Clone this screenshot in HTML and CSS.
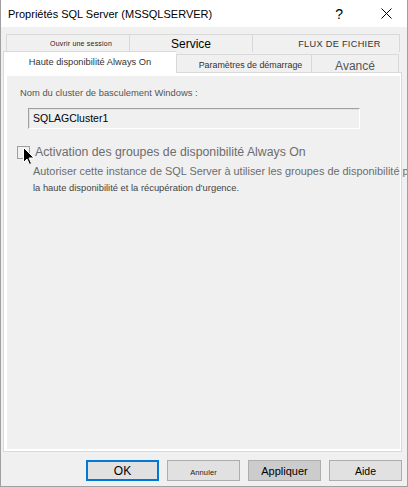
FILE: index.html
```html
<!DOCTYPE html>
<html lang="fr">
<head>
<meta charset="utf-8">
<title>Propriétés SQL Server</title>
<link rel="stylesheet" href="styles.css">
</head>
<body>
<div class="window">
  <div class="titlebar">
    <span class="title">Propriétés SQL Server (MSSQLSERVER)</span>
    <span class="help">?</span>
    <svg class="close" width="11" height="11" viewBox="0 0 11 11"><path d="M0.5 0.5 L10.5 10.5 M10.5 0.5 L0.5 10.5" stroke="#000" stroke-width="1" fill="none"/></svg>
  </div>
  <div class="body">
    <div class="tabrow back">
      <div class="tab t-ouvrir"><span class="tiny">Ouvrir une session</span></div>
      <div class="tab t-service">Service</div>
      <div class="tab t-flux">FLUX DE FICHIER</div>
    </div>
    <div class="tabrow front">
      <div class="tab selected t-haute">Haute disponibilité Always On</div>
      <div class="tab t-param">Paramètres de démarrage</div>
      <div class="tab t-avance">Avancé</div>
    </div>
    <div class="panel">
      <div class="page">
        <div class="label">Nom du cluster de basculement Windows :</div>
        <div class="textbox">SQLAGCluster1</div>
        <div class="checkrow">
          <span class="checkbox"></span>
          <span class="checklabel">Activation des groupes de disponibilité Always On</span>
          <svg class="cursor" width="12" height="19" viewBox="0 0 12 19"><path d="M0.5 0.5 L0.5 15.5 L4 12 L6.5 17.5 L8.5 16.5 L6 11 L11 11 Z" fill="#000" stroke="#fff" stroke-width="1"/></svg>
        </div>
        <div class="desc1">Autoriser cette instance de SQL Server à utiliser les groupes de disponibilité pour</div>
        <div class="desc2">la haute disponibilité et la récupération d'urgence.</div>
      </div>
    </div>
    <div class="buttons">
      <button class="btn default">OK</button>
      <button class="btn"><span class="tiny2">Annuler</span></button>
      <button class="btn hover">Appliquer</button>
      <button class="btn small">Aide</button>
    </div>
  </div>
</div>
</body>
</html>
```
FILE: styles.css
```css
* { box-sizing: border-box; }
html, body { margin: 0; padding: 0; }
body {
  width: 408px;
  height: 487px;
  overflow: hidden;
  font-family: "Liberation Sans", Arial, sans-serif;
  background: #f0f0f0;
}
.window {
  width: 408px;
  height: 487px;
  border: 1px solid #a0a0a0;
  border-top: none;
  background: #f0f0f0;
  display: flex;
  flex-direction: column;
  overflow: hidden;
}
.titlebar {
  height: 27px;
  background: #fff;
  display: flex;
  align-items: center;
  padding-left: 7px;
  flex-shrink: 0;
}
.title {
  font-size: 11px;
  color: #000;
  flex: 1;
}
.help {
  font-size: 14px;
  color: #000;
  margin-right: 38px;
}
.close { margin-right: 15px; }
.body {
  flex: 1;
  display: flex;
  flex-direction: column;
  padding: 7px 5px 0 2px;
}
.tabrow { display: flex; }
.tabrow.back {
  margin-left: 3px;
  height: 18px;
}
.tab {
  border: 1px solid #d9d9d9;
  border-bottom: none;
  border-right: none;
  display: flex;
  align-items: center;
  justify-content: center;
  background: #f0f0f0;
  white-space: nowrap;
}
.tab:last-child { border-right: 1px solid #d9d9d9; }
.t-ouvrir { width: 123px; padding-left: 26px; }
.t-service { width: 123px; font-size: 12px; color: #000; padding-top: 1px; }
.t-flux { width: 148px; font-size: 9.2px; letter-spacing: 0.3px; color: #333; padding-left: 27px; }
.tiny { font-size: 7px; color: #222; letter-spacing: 0.2px; }
.tiny2 { font-size: 7.5px; color: #222; letter-spacing: 0.1px; }
.tabrow.front {
  margin-top: -1px;
  height: 22px;
  align-items: flex-end;
}
.t-haute {
  width: 173px;
  height: 22px;
  background: #fff;
  font-size: 9.3px;
  color: #333;
  position: relative;
  z-index: 2;
  padding-bottom: 2px;
}
.t-param { width: 135px; height: 19px; font-size: 8.9px; color: #333; padding-top: 1px; padding-left: 13px; }
.t-avance { width: 88px; height: 19px; font-size: 12px; color: #555; padding-top: 3px; }
.panel {
  margin-top: -1px;
  width: 399px;
  height: 380px;
  border: 1px solid #d9d9d9;
  background: #fff;
  padding: 3px 1px 2px 3px;
  position: relative;
  z-index: 1;
  flex-shrink: 0;
}
.page {
  width: 100%;
  height: 100%;
  background: #f0f0f0;
  padding: 11px 0 0 13px;
  overflow: visible;
}
.label {
  font-size: 9.4px;
  color: #555;
  height: 12px;
  line-height: 12px;
}
.textbox {
  margin: 9px 0 0 8px;
  width: 332px;
  height: 21px;
  border: 1px solid;
  border-color: #a0a0a0 #fff #fff #a0a0a0;
  box-shadow: inset 1px 1px 0 #e3e3e3;
  background: #f0f0f0;
  font-size: 10.5px;
  color: #000;
  padding: 2px 0 0 4px;
  line-height: 15px;
}
.checkrow {
  position: relative;
  display: flex;
  align-items: center;
  margin: 15px 0 0 -3px;
  height: 16px;
}
.checkbox {
  width: 13px;
  height: 13px;
  border: 1px solid #a0a0a0;
  background: #f0f0f0;
  flex-shrink: 0;
}
.checklabel {
  font-size: 12.3px;
  color: #6d6d6d;
  margin-left: 5px;
  white-space: nowrap;
}
.cursor {
  position: absolute;
  left: 6px;
  top: 3px;
}
.desc1 {
  margin: 4px 0 0 13px;
  font-size: 10.9px;
  color: #6d6d6d;
  white-space: nowrap;
  line-height: 15px;
}
.desc2 {
  margin: 2px 0 0 13px;
  font-size: 9.4px;
  color: #444;
  white-space: nowrap;
  line-height: 13px;
}
.buttons {
  display: flex;
  justify-content: flex-end;
  gap: 8px;
  margin-top: 8px;
  padding-right: 0;
}
.btn {
  width: 73px;
  height: 21px;
  border: 1px solid #adadad;
  background: #e1e1e1;
  font-family: "Liberation Sans", Arial, sans-serif;
  font-size: 11px;
  color: #000;
  padding: 0;
  margin: 0;
}
.btn.default { border: 2px solid #0078d7; font-size: 12px; }
.btn.hover { background: #cccccc; }
.btn.small { font-size: 10.5px; }
```
